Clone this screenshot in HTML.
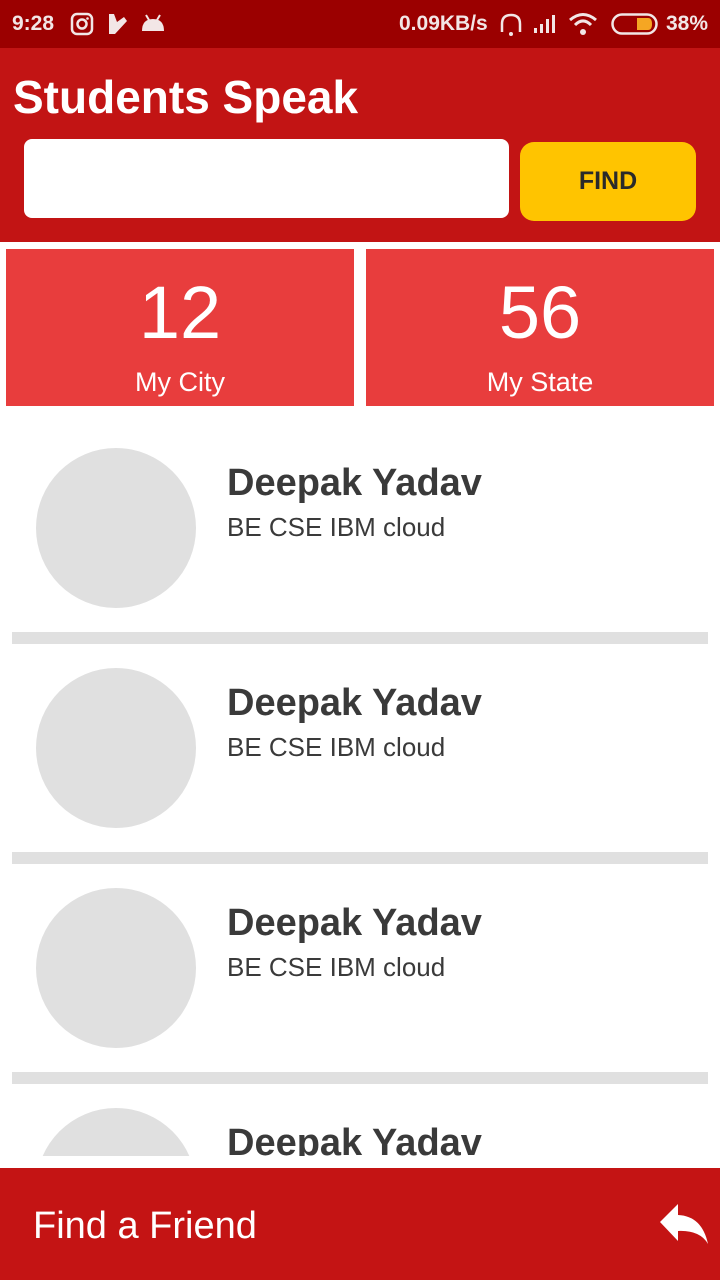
<!DOCTYPE html>
<html><head><style>
*{margin:0;padding:0;box-sizing:border-box}
body{width:720px;height:1280px;overflow:hidden;background:#fff;font-family:"Liberation Sans",Roboto,sans-serif;position:relative}
.abs{position:absolute}
.sb{left:0;top:0;width:720px;height:48px;background:#9b0000;color:#f2e6e6;font-weight:bold;font-size:21px}
.hd{left:0;top:48px;width:720px;height:194px;background:#c21414}
.tile{top:249px;width:348px;height:157px;background:#e83d3d;color:#fff;text-align:center}
.circ{left:36px;width:160px;height:160px;border-radius:50%;background:#e0e0e0}
.name{left:227px;font-size:38px;font-weight:bold;color:#3a3a3a}
.sub{left:227px;font-size:26px;color:#3a3a3a}
.div{left:12px;width:696px;height:12px;background:#e0e0e0}
</style></head><body>
<div class="abs sb">
<span class="abs" style="left:12px;top:12px">9:28</span>
<svg class="abs" style="left:70px;top:12px" width="24" height="24" viewBox="0 0 24 24"><rect x="2" y="2" width="20" height="20" rx="5" fill="none" stroke="#f2e6e6" stroke-width="2.5"/><circle cx="12" cy="12" r="4.5" fill="none" stroke="#f2e6e6" stroke-width="2.5"/><circle cx="17.5" cy="6.5" r="1.3" fill="#f2e6e6"/></svg>
<svg class="abs" style="left:107px;top:13px" width="22" height="22" viewBox="0 0 22 22"><path d="M2 1 L7 1 L10 9 L17 4 L20 8 L8 21 L2 21 Z" fill="#f2e6e6"/></svg>
<svg class="abs" style="left:140px;top:13px" width="26" height="22" viewBox="0 0 26 22"><path d="M2 18 Q2 6 13 6 Q24 6 24 18 Z" fill="#f2e6e6"/><line x1="6" y1="2" x2="9" y2="7" stroke="#f2e6e6" stroke-width="2"/><line x1="20" y1="2" x2="17" y2="7" stroke="#f2e6e6" stroke-width="2"/></svg>
<span class="abs" style="left:399px;top:12px">0.09KB/s</span>
<svg class="abs" style="left:498px;top:12px" width="26" height="26" viewBox="0 0 26 26"><path d="M4 20 V12 Q4 3 13 3 Q22 3 22 12 V20" fill="none" stroke="#f2e6e6" stroke-width="2.5"/><circle cx="13" cy="22" r="2" fill="#f2e6e6"/></svg>
<svg class="abs" style="left:533px;top:14px" width="24" height="20" viewBox="0 0 24 20"><rect x="1" y="14" width="3" height="5" fill="#f2e6e6"/><rect x="7" y="10" width="3" height="9" fill="#f2e6e6"/><rect x="13" y="5" width="3" height="14" fill="#f2e6e6"/><rect x="19" y="1" width="3" height="18" fill="#f2e6e6"/></svg>
<svg class="abs" style="left:568px;top:12px" width="30" height="24" viewBox="0 0 30 24"><path d="M2 8 Q15 -3 28 8" fill="none" stroke="#f2e6e6" stroke-width="3"/><path d="M7 13 Q15 5 23 13" fill="none" stroke="#f2e6e6" stroke-width="3"/><circle cx="15" cy="20" r="3" fill="#f2e6e6"/></svg>
<svg class="abs" style="left:611px;top:13px" width="48" height="22" viewBox="0 0 48 22"><rect x="1.5" y="1.5" width="44" height="19" rx="9.5" fill="none" stroke="#f2e6e6" stroke-width="2.5"/><path d="M26 5 H37 Q41 5 41 11 Q41 17 37 17 H26 Z" fill="#f5a623"/></svg>
<span class="abs" style="left:666px;top:12px">38%</span>
</div>
<div class="abs hd">
<div class="abs" style="left:13px;top:22px;font-size:46px;font-weight:bold;color:#fff">Students Speak</div>
<div class="abs" style="left:24px;top:91px;width:485px;height:79px;background:#fff;border-radius:8px"></div>
<div class="abs" style="left:520px;top:94px;width:176px;height:79px;background:#ffc400;border-radius:14px;color:#2a2a2a;font-size:25px;font-weight:bold;text-align:center;line-height:79px">FIND</div>
</div>
<div class="abs tile" style="left:6px"><div style="font-size:74px;margin-top:24px;line-height:80px">12</div><div style="font-size:27px;margin-top:14px">My City</div></div>
<div class="abs tile" style="left:366px"><div style="font-size:74px;margin-top:24px;line-height:80px">56</div><div style="font-size:27px;margin-top:14px">My State</div></div>

<div class="abs circ" style="top:448px"></div>
<div class="abs name" style="top:462px">Deepak Yadav</div>
<div class="abs sub" style="top:512px">BE CSE IBM cloud</div>
<div class="abs div" style="top:632px"></div>
<div class="abs circ" style="top:668px"></div>
<div class="abs name" style="top:682px">Deepak Yadav</div>
<div class="abs sub" style="top:732px">BE CSE IBM cloud</div>
<div class="abs div" style="top:852px"></div>
<div class="abs circ" style="top:888px"></div>
<div class="abs name" style="top:902px">Deepak Yadav</div>
<div class="abs sub" style="top:952px">BE CSE IBM cloud</div>
<div class="abs div" style="top:1072px"></div>
<div class="abs" style="left:0;top:1084px;width:720px;height:72px;overflow:hidden">
<div class="abs circ" style="top:24px"></div>
<div class="abs name" style="top:38px">Deepak Yadav</div>
</div>

<div class="abs" style="left:0;top:1168px;width:720px;height:112px;background:#c41414">
<div class="abs" style="left:33px;top:37px;font-size:38px;color:#fff">Find a Friend</div>
<svg class="abs" style="left:656px;top:34px" width="56" height="46" viewBox="0 0 56 46"><path d="M4 20 L22 2 L22 13 Q46 14 52 42 Q44 28 22 29 L22 39 Z" fill="#fff"/></svg>
</div>
</body></html>
